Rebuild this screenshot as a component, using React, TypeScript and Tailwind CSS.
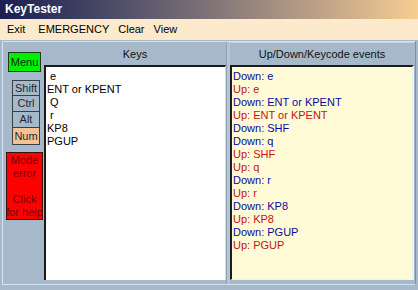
const keys = [" e", "ENT or KPENT", " Q", " r", "KP8", "PGUP"];

const events: { dir: "Down" | "Up"; key: string }[] = [
  { dir: "Down", key: "e" },
  { dir: "Up", key: "e" },
  { dir: "Down", key: "ENT or KPENT" },
  { dir: "Up", key: "ENT or KPENT" },
  { dir: "Down", key: "SHF" },
  { dir: "Down", key: "q" },
  { dir: "Up", key: "SHF" },
  { dir: "Up", key: "q" },
  { dir: "Down", key: "r" },
  { dir: "Up", key: "r" },
  { dir: "Down", key: "KP8" },
  { dir: "Up", key: "KP8" },
  { dir: "Down", key: "PGUP" },
  { dir: "Up", key: "PGUP" },
];

const modifiers = ["Shift", "Ctrl", "Alt", "Num"];

export default function App() {
  return (
    <div className="w-[418px] h-[290px] flex flex-col overflow-hidden font-['Liberation_Sans',Arial,sans-serif] text-[11px] leading-[13px]">
      {/* Title bar */}
      <div className="h-[19px] shrink-0 flex items-center pl-[5px] bg-linear-to-r from-[#1b1e50] to-[#f8cd91] text-white font-bold text-[12px]">
        KeyTester
      </div>

      {/* Menu bar */}
      <div className="h-[21px] shrink-0 flex items-center pl-[7px] bg-[#fde9cb] text-black text-[11px]">
        <span className="mr-[13px]">Exit</span>
        <span className="mr-[9px]">EMERGENCY</span>
        <span className="mr-[9px]">Clear</span>
        <span>View</span>
      </div>

      {/* Main area */}
      <div className="flex-1 flex bg-[#a6b9cb] pt-[1px] pb-[5px] px-[2px]">
        <div className="flex-1 flex border-t border-l border-[#d6e1eb] border-b border-b-[#d6e1eb] border-r border-r-[#7d90a3]">
          {/* Left buttons */}
          <div className="w-[41px] shrink-0 flex flex-col items-start">
            <div className="mt-[10px] ml-[5px] w-[33px] h-[20px] flex items-center justify-center bg-[#00f000] border border-[#1f3a1f] text-[#0b2a0b]">
              Menu
            </div>
            <div className="mt-[8px] ml-[9px] w-[28px] flex flex-col">
              {modifiers.map((m, i) => (
                <div
                  key={m}
                  className={`h-[16px] flex items-center justify-center border border-[#3a3f46] text-[#1e2630] ${
                    i > 0 ? "border-t-0" : ""
                  } ${m === "Num" ? "bg-[#f6c293] h-[17px]" : ""}`}
                >
                  {m}
                </div>
              ))}
            </div>
            <div className="mt-[7px] ml-[3px] w-[37px] h-[68px] bg-[#ff0000] border border-[#3a1010] text-[#7a0000] flex flex-col items-center pt-[1px] whitespace-nowrap">
              <span>Mode</span>
              <span>error</span>
              <span>&nbsp;</span>
              <span>Click</span>
              <span>for help</span>
            </div>
          </div>

          {/* Keys column */}
          <div className="w-[182px] shrink-0 flex flex-col pb-[4px]">
            <div className="h-[23px] shrink-0 flex items-center justify-center text-[#111] pt-[1px]">Keys</div>
            <div className="flex-1 bg-white border-l-2 border-t-2 border-[#1c1c1c] border-r border-r-[#d9d9d9] pl-[1px] pt-[3px] text-black">
              {keys.map((k, i) => (
                <div key={i} className="whitespace-pre">
                  {k}
                </div>
              ))}
            </div>
          </div>

          {/* Splitter */}
          <div className="w-[4px] shrink-0 bg-[#b4c5d5] border-l border-[#8ea2b5]" />

          {/* Events column */}
          <div className="flex-1 flex flex-col pb-[4px] pr-[1px]">
            <div className="h-[23px] shrink-0 flex items-center justify-center text-[#111] pt-[1px] border-t border-[#c9d6e2]">
              Up/Down/Keycode events
            </div>
            <div className="flex-1 bg-[#fffbd6] border-l-2 border-t-2 border-[#1c1c1c] border-r-2 border-r-[#eef2f6] border-b border-b-[#eef2f6] pl-[1px] pt-[3px]">
              {events.map((e, i) => (
                <div
                  key={i}
                  className={e.dir === "Down" ? "text-[#0a0a9c]" : "text-[#c81010]"}
                >
                  {e.dir}: {e.key}
                </div>
              ))}
            </div>
          </div>
        </div>
      </div>
    </div>
  );
}
